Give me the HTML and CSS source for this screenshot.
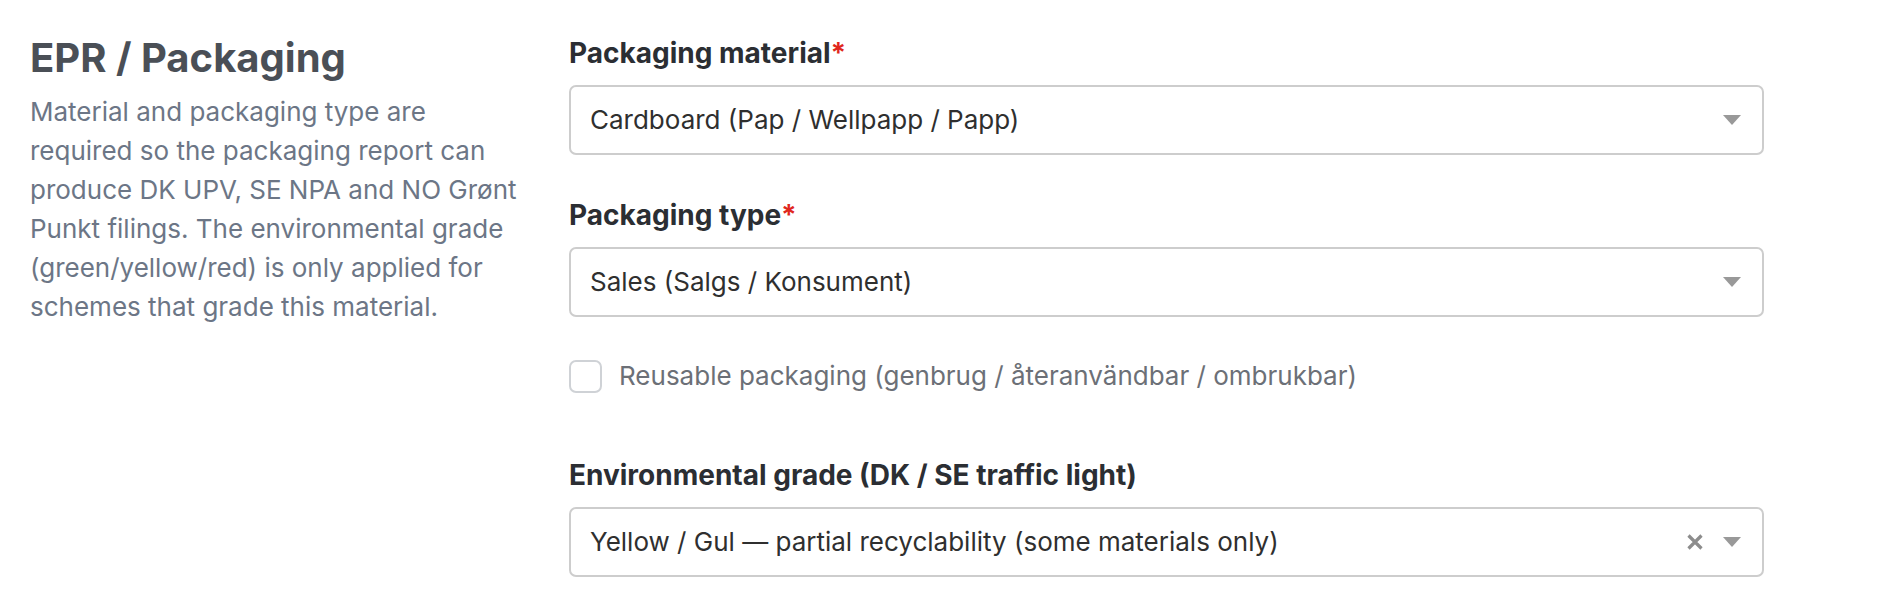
FILE: index.html
```html
<!DOCTYPE html>
<html lang="en">
<head>
<meta charset="utf-8">
<title>EPR / Packaging</title>
<link rel="stylesheet" href="styles.css">
</head>
<body>
<div class="section">
  <div class="intro">
    <h2 class="intro-title">EPR / Packaging</h2>
    <p class="intro-text">Material and packaging type are required so the packaging report can produce DK UPV, SE NPA and NO Grønt Punkt filings. The environmental grade (green/yellow/red) is only applied for schemes that grade this material.</p>
  </div>
  <div class="fields">
    <div class="field">
      <label class="field-label">Packaging material<span class="req">*</span></label>
      <div class="select">
        <span class="select-value">Cardboard (Pap / Wellpapp / Papp)</span>
        <span class="select-arrow"></span>
      </div>
    </div>
    <div class="field">
      <label class="field-label">Packaging type<span class="req">*</span></label>
      <div class="select">
        <span class="select-value">Sales (Salgs / Konsument)</span>
        <span class="select-arrow"></span>
      </div>
    </div>
    <div class="field field-check">
      <label class="check">
        <span class="check-box"></span>
        <span class="check-text">Reusable packaging (genbrug / återanvändbar / ombrukbar)</span>
      </label>
    </div>
    <div class="field">
      <label class="field-label">Environmental grade (DK / SE traffic light)</label>
      <div class="select">
        <span class="select-value">Yellow / Gul — partial recyclability (some materials only)</span>
        <svg class="select-clear" viewBox="0 0 16 16" width="16" height="16" aria-hidden="true"><path d="M1.5 1.5 L14.5 14.5 M14.5 1.5 L1.5 14.5" stroke="#8c8c8c" stroke-width="3.2" stroke-linecap="butt"/></svg>
        <span class="select-arrow"></span>
      </div>
    </div>
  </div>
</div>
</body>
</html>
```

FILE: styles.css
```css
* { box-sizing: border-box; }
html, body { margin: 0; padding: 0; background: #fff; }
body {
  font-family: Inter, "Noto Sans", "Liberation Sans", sans-serif;
  font-size: 26px;
  line-height: 1.5;
  color: #2f3236;
}
.section {
  display: grid;
  grid-template-columns: 496px 1195px;
  column-gap: 43px;
  padding: 34px 30px 0 30px;
}
.intro-title {
  margin: 0 0 10px 0;
  font-size: 40px;
  line-height: 48px;
  font-weight: 700;
  color: #4a4f56;
}
.intro-text {
  margin: 0;
  font-size: 26px;
  line-height: 39px;
  color: #6c7686;
}
.fields {
  display: flex;
  flex-direction: column;
  padding-top: 1px;
}
.field { margin-bottom: 42px; }
.field-check { margin-bottom: 63px; margin-top: -1px; }
.field-label {
  display: block;
  font-weight: 700;
  font-size: 28px;
  line-height: 36px;
  color: #2b2e33;
  margin-bottom: 14px;
}
.req { color: #e0271d; }
.select {
  display: flex;
  align-items: center;
  height: 70px;
  border: 2px solid #cdcdcd;
  border-radius: 7px;
  padding: 0 21px 0 19px;
  background: #fff;
}
.select-value {
  flex: 1;
  color: #2f2f2f;
  font-size: 26px;
  line-height: 36px;
  white-space: nowrap;
}
.select-clear {
  width: 16px;
  height: 16px;
  margin-right: 20px;
}
.select-arrow {
  width: 0;
  height: 0;
  border-left: 9px solid transparent;
  border-right: 9px solid transparent;
  border-top: 10px solid #999;
}
.check {
  display: flex;
  align-items: center;
  gap: 17px;
  cursor: pointer;
}
.check-box {
  width: 33px;
  height: 33px;
  border: 2px solid #cfd2d6;
  border-radius: 7px;
  background: #fff;
  flex: none;
}
.check-text {
  color: #6c7077;
  font-size: 26px;
  line-height: 36px;
}
```
